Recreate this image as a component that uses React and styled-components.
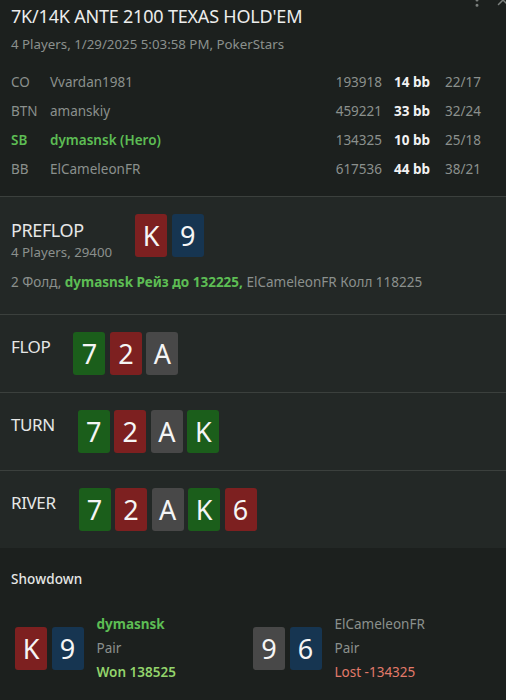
import React from 'react';
import styled, { createGlobalStyle } from 'styled-components';
import { MoreVertical, X } from 'lucide-react';

const GlobalStyle = createGlobalStyle`
    html, body {
        margin: 0;
        padding: 0;
        background: #1c201e;
    }
    body {
        font-family: "Noto Sans", "Open Sans", sans-serif;
        color: #e2e4e3;
        width: 506px;
        height: 700px;
        overflow: hidden;
    }
`;

const players = [
    { pos: 'CO', name: 'Vvardan1981', stack: '193918', bb: '14 bb', stats: '22/17' },
    { pos: 'BTN', name: 'amanskiy', stack: '459221', bb: '33 bb', stats: '32/24' },
    { pos: 'SB', name: 'dymasnsk (Hero)', stack: '134325', bb: '10 bb', stats: '25/18', hero: true },
    { pos: 'BB', name: 'ElCameleonFR', stack: '617536', bb: '44 bb', stats: '38/21' },
];

const streets = [
    { name: 'FLOP', cards: [['7', 'green'], ['2', 'red'], ['A', 'gray']] },
    { name: 'TURN', cards: [['7', 'green'], ['2', 'red'], ['A', 'gray'], ['K', 'green']] },
    { name: 'RIVER', cards: [['7', 'green'], ['2', 'red'], ['A', 'gray'], ['K', 'green'], ['6', 'red']] },
];

const suitColors = {
    red: '#7d2020',
    blue: '#163551',
    gray: '#484848',
    green: '#1b5e1b',
};

function Card({ rank, suit }) {
    return <CardBox $suit={suit}>{rank}</CardBox>;
}

function Cards({ list }) {
    return (
        <CardRow>
            {list.map(([rank, suit], i) => <Card key={i} rank={rank} suit={suit} />)}
        </CardRow>
    );
}

function App() {
    return (
        <Wrapper>
            <GlobalStyle />
            <Header>
                <TopIcons>
                    <MoreVertical size={18} />
                    <X size={18} />
                </TopIcons>
                <Title>7K/14K ANTE 2100 TEXAS HOLD'EM</Title>
                <SubTitle>4 Players, 1/29/2025 5:03:58 PM, PokerStars</SubTitle>
                <PlayerTable>
                    {players.map((p) => (
                        <React.Fragment key={p.pos}>
                            <Pos $hero={p.hero}>{p.pos}</Pos>
                            <Name $hero={p.hero}>{p.name}</Name>
                            <Stack>{p.stack}</Stack>
                            <BB>{p.bb}</BB>
                            <Stats>{p.stats}</Stats>
                        </React.Fragment>
                    ))}
                </PlayerTable>
            </Header>

            <Street $height={118}>
                <StreetRow>
                    <div>
                        <StreetName>PREFLOP</StreetName>
                        <StreetInfo>4 Players, 29400</StreetInfo>
                    </div>
                    <Cards list={[['K', 'red'], ['9', 'blue']]} />
                </StreetRow>
                <Action>
                    2 Фолд, <HeroAction>dymasnsk Рейз до 132225,</HeroAction> ElCameleonFR Колл 118225
                </Action>
            </Street>

            {streets.map((s) => (
                <Street key={s.name} $height={78}>
                    <StreetRow>
                        <StreetName $small>{s.name}</StreetName>
                        <Cards list={s.cards} />
                    </StreetRow>
                </Street>
            ))}

            <Showdown>
                <ShowdownTitle>Showdown</ShowdownTitle>
                <ShowdownGrid>
                    <ShowdownPlayer>
                        <Cards list={[['K', 'red'], ['9', 'blue']]} />
                        <ShowdownInfo>
                            <SdName $hero>dymasnsk</SdName>
                            <SdHand>Pair</SdHand>
                            <SdResult $won>Won 138525</SdResult>
                        </ShowdownInfo>
                    </ShowdownPlayer>
                    <ShowdownPlayer>
                        <Cards list={[['9', 'gray'], ['6', 'blue']]} />
                        <ShowdownInfo>
                            <SdName>ElCameleonFR</SdName>
                            <SdHand>Pair</SdHand>
                            <SdResult>Lost -134325</SdResult>
                        </ShowdownInfo>
                    </ShowdownPlayer>
                </ShowdownGrid>
            </Showdown>
        </Wrapper>
    );
}

const Wrapper = styled.div`
    display: flex;
    flex-direction: column;
    width: 506px;
    height: 700px;
`;

const Header = styled.header`
    position: relative;
    height: 196px;
    padding: 0 11px;
    box-sizing: border-box;
    background: #1c201e;
`;

const TopIcons = styled.div`
    position: absolute;
    top: -9px;
    right: -6px;
    display: flex;
    gap: 8px;
    color: #7c807e;
`;

const Title = styled.h1`
    margin: 0;
    height: 32px;
    line-height: 32px;
    font-size: 18px;
    letter-spacing: -0.2px;
    font-weight: 400;
    color: #ecedec;
`;

const SubTitle = styled.div`
    height: 24px;
    line-height: 24px;
    font-size: 13.3px;
    color: #8b908d;
`;

const PlayerTable = styled.div`
    display: grid;
    grid-template-columns: 39px 1fr auto 51px 50px;
    grid-auto-rows: 29px;
    margin-top: 11px;
    align-items: center;
    font-size: 13.5px;
`;

const Pos = styled.span`
    color: ${(p) => (p.$hero ? '#5dbd54' : '#8b908d')};
    font-weight: ${(p) => (p.$hero ? 600 : 400)};
`;

const Name = styled(Pos)``;

const Stack = styled.span`
    color: #8b908d;
    text-align: right;
    padding-right: 12px;
`;

const BB = styled.span`
    color: #f2f2f2;
    font-weight: 700;
`;

const Stats = styled.span`
    color: #8b908d;
`;

const Street = styled.section`
    height: ${(p) => p.$height}px;
    box-sizing: border-box;
    padding: 17px 11px 0;
    background: #232826;
    border-top: 1px solid #3b403d;
`;

const StreetRow = styled.div`
    display: flex;
    align-items: flex-start;
    gap: 23px;
`;

const StreetName = styled.div`
    font-size: ${(p) => (p.$small ? 17 : 18)}px;
    letter-spacing: -0.4px;
    line-height: 24px;
    margin-top: ${(p) => (p.$small ? 3 : 4)}px;
    color: #e6e7e6;
`;

const StreetInfo = styled.div`
    font-size: 13.3px;
    line-height: 20px;
    color: #8b908d;
`;

const CardRow = styled.div`
    display: flex;
    gap: 4.5px;
`;

const CardBox = styled.div`
    width: 32px;
    height: 43px;
    border-radius: 3px;
    background: ${(p) => suitColors[p.$suit]};
    color: #f5f5f5;
    font-size: 27px;
    line-height: 43px;
    text-align: center;
`;

const Action = styled.div`
    margin-top: 11px;
    font-size: 13.5px;
    color: #8b908d;
`;

const HeroAction = styled.span`
    color: #5dbd54;
    font-weight: 700;
`;

const Showdown = styled.section`
    flex: 1;
    padding: 22px 11px 0;
    background: #1c201e;
`;

const ShowdownTitle = styled.div`
    font-size: 13.5px;
    font-weight: 500;
    letter-spacing: 0.1px;
    color: #e6e7e6;
`;

const ShowdownGrid = styled.div`
    display: grid;
    grid-template-columns: 1fr 1fr;
    padding: 0 4px;
    margin-top: 24px;
`;

const ShowdownPlayer = styled.div`
    display: flex;
    align-items: center;
    gap: 13px;
`;

const ShowdownInfo = styled.div`
    display: flex;
    flex-direction: column;
    font-size: 13.5px;
    line-height: 24px;
`;

const SdName = styled.span`
    color: ${(p) => (p.$hero ? '#5dbd54' : '#8b908d')};
    font-weight: ${(p) => (p.$hero ? 700 : 400)};
`;

const SdHand = styled.span`
    color: #8b908d;
`;

const SdResult = styled.span`
    color: ${(p) => (p.$won ? '#93d46c' : '#e27a6a')};
    font-weight: ${(p) => (p.$won ? 600 : 400)};
`;

export default App;
